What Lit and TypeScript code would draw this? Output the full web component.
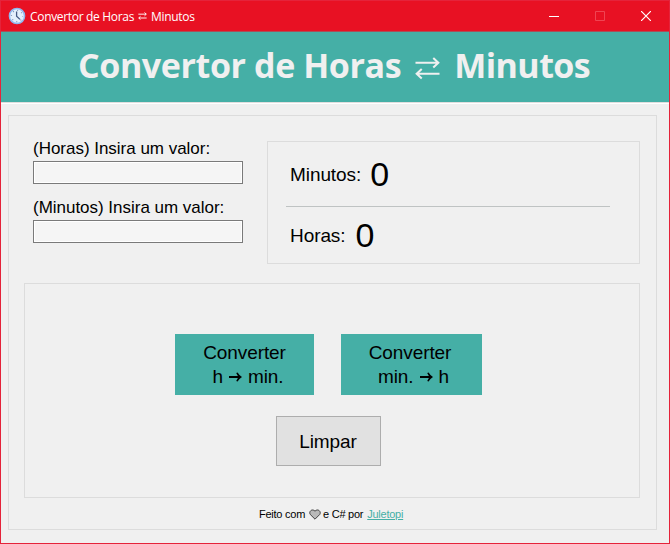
import { LitElement, html, css, svg } from "lit";
import { customElement, property, state } from "lit/decorators.js";

const swapIcon = (cls: string, stroke: number) => html`
  <svg class=${cls} viewBox="0 0 26 24" fill="none" stroke="currentColor" stroke-width=${stroke}>
    ${svg`<path d="M0.5 6.5H24M19 1.5l5.3 5-5.3 5M25.5 18H2M7 13l-5.3 5 5.3 5"/>`}
  </svg>`;

const arrowIcon = () => html`
  <svg class="arrow" viewBox="0 0 13 10" fill="currentColor">
    <path d="M0 4.1H8.9L7.2 1L8.6 0.6Q10.2 3.4 13 5Q10.2 6.6 8.6 9.4L7.2 9L8.9 5.9H0Z" />
  </svg>`;

@customElement("title-bar")
export class TitleBar extends LitElement {
  static styles = css`
    :host {
      display: flex;
      align-items: center;
      height: 31px;
      flex: none;
      background: #e81123;
      color: #fff;
      font: 12px "Open Sans", "Noto Sans", sans-serif;
      border-bottom: 1px solid #a8505a;
      box-sizing: border-box;
      white-space: pre;
    }
    .clock { width: 18px; height: 18px; margin: 0 4px 0 7px; }
    .name { letter-spacing: -0.32px; }
    .swap { width: 9px; height: 8px; margin: 0 4px 0 4px; }
    .controls { margin: -1px 0 0 auto; display: flex; }
    .control { width: 46px; display: grid; place-items: center; }
    .control svg { width: 10px; height: 10px; }
    .dim { color: #f04452; }
  `;
  render() {
    return html`
      <svg class="clock" viewBox="0 0 18 18">
        <circle cx="9" cy="9" r="7.6" fill="#e4effc" stroke="#8fb8ee" stroke-width="1.5" />
        <circle cx="9" cy="9" r="5.6" fill="none" stroke="#8195b8" stroke-width="1.2" stroke-dasharray="1 3.4" stroke-dashoffset="0.5" />
        <path d="M8.6 4.6V9.2L12 12.4" fill="none" stroke="#465a84" stroke-width="1.3" />
      </svg>
      <span class="name">Convertor de Horas</span>${swapIcon("swap", 2.8)}<span class="name">Minutos</span>
      <div class="controls">
        <div class="control">
          <svg viewBox="0 0 10 10"><path d="M0 5.5H10" stroke="#fff" /></svg>
        </div>
        <div class="control dim">
          <svg viewBox="0 0 10 10"><path d="M.5 .5h9v9h-9z" fill="none" stroke="currentColor" /></svg>
        </div>
        <div class="control">
          <svg viewBox="0 0 10 10"><path d="M0 0L10 10M10 0L0 10" stroke="#fff" stroke-width="1.2" /></svg>
        </div>
      </div>`;
  }
}

@customElement("value-field")
export class ValueField extends LitElement {
  @property() label = "";
  @property() value = "";
  static styles = css`
    :host { display: block; height: 59px; }
    label {
      display: block;
      height: 23px;
      line-height: 21px;
      font-size: 17px;
      white-space: nowrap;
      letter-spacing: -0.02px;
    }
    input {
      display: block;
      box-sizing: border-box;
      width: 210px;
      height: 23px;
      padding: 0 3px;
      border: 1px solid #7a7a7a;
      border-radius: 0;
      outline: none;
      background: #f5f5f5;
      box-shadow: inset 0 0 0 1px #fff;
      font: 15px "Liberation Sans", sans-serif;
    }
  `;
  private onInput(e: Event) {
    this.value = (e.target as HTMLInputElement).value;
    this.dispatchEvent(new CustomEvent("value-change", { detail: this.value }));
  }
  render() {
    return html`<label for="f">${this.label}</label>
      <input id="f" .value=${this.value} @input=${this.onInput} />`;
  }
}

@customElement("app-root")
export class AppRoot extends LitElement {
  @state() private hoursIn = "";
  @state() private minutesIn = "";
  @state() private minutes = 0;
  @state() private hours = 0;

  static styles = css`
    :host {
      display: flex;
      flex-direction: column;
      box-sizing: border-box;
      width: 670px;
      height: 544px;
      border: 1px solid #e5233a;
      background: #f0f0f0;
      color: #000;
      font-family: "Liberation Sans", Arial, sans-serif;
    }
    .banner {
      display: flex;
      align-items: center;
      flex: none;
      box-sizing: border-box;
      height: 70px;
      padding: 0 0 4px 77px;
      background: #45afa6;
      color: #f0f0f0;
      font: bold 34px "Open Sans", "Noto Sans", sans-serif;
      white-space: nowrap;
    }
    .t1 { letter-spacing: -0.4px; }
    .t2 { letter-spacing: -0.55px; }
    .swap { width: 25px; height: 24px; margin: 5px 14px 0 14px; }
    .rule { height: 2px; flex: none; background: #fff; border-top: 1px solid #e0dede; box-sizing: border-box; }
    .frame { border: 1px solid #dcdcdc; box-sizing: border-box; }
    .outer { width: 649px; height: 415px; margin: 11px 0 0 7px; padding: 25px 0 0 15px; }
    .top { display: flex; height: 142px; }
    .fields { width: 234px; padding: 0 0 0 9px; margin-top: -3px; box-sizing: content-box; }
    .results { width: 373px; height: 123px; padding: 0 29px 0 18px; }
    .result { display: flex; align-items: center; height: 64px; padding-left: 4px; font-size: 19px; }
    .result + .result { border-top: 1px solid #bfc3c3; height: 56px; }
    .result .key { margin-top: 2px; letter-spacing: -0.08px; }
    .result .num { font-size: 34px; margin-left: 9px; }
    .result + .result .num { margin-left: 10px; }
    .actions { width: 616px; height: 215px; padding: 50px 0 0 150px; }
    .pair { display: flex; gap: 27px; }
    button {
      display: block;
      box-sizing: border-box;
      margin: 0;
      padding: 0;
      border: 0;
      border-radius: 0;
      color: #000;
      font: 19px/24px "Liberation Sans", Arial, sans-serif;
      letter-spacing: -0.1px;
      white-space: pre;
    }
    .convert { width: 139px; height: 61px; background: #45afa6; }
    .convert.wide { width: 141px; padding-right: 3px; }
    .line { display: flex; justify-content: center; align-items: center; gap: 6px; height: 24px; }
    .line.second { padding-left: 7px; }
    .arrow { width: 13px; height: 10px; margin-top: 1px; }
    .clear { width: 105px; height: 50px; margin: 21px 0 0 101px; padding: 1px 1px 0 0; border: 1px solid #adadad; background: #e1e1e1; }
    .credit {
      display: flex;
      align-items: center;
      height: 32px;
      padding-left: 235px;
      font-size: 11px;
      letter-spacing: -0.25px;
      white-space: nowrap;
    }
    .heart { width: 12px; height: 11px; margin: 0 2px 0 4px; }
    .credit a { margin-left: 4px; color: #45afa6; text-decoration: underline; }
  `;

  private toMinutes() {
    this.minutes = (Number(this.hoursIn) || 0) * 60;
  }
  private toHours() {
    this.hours = (Number(this.minutesIn) || 0) / 60;
  }
  private clear() {
    this.hoursIn = this.minutesIn = "";
    this.minutes = this.hours = 0;
  }

  render() {
    return html`
      <title-bar></title-bar>
      <header class="banner">
        <span class="t1">Convertor de Horas</span>${swapIcon("swap", 2.1)}<span class="t2">Minutos</span>
      </header>
      <div class="rule"></div>
      <main class="frame outer">
        <div class="top">
          <div class="fields">
            <value-field label="(Horas) Insira um valor:" .value=${this.hoursIn}
              @value-change=${(e: CustomEvent) => (this.hoursIn = e.detail)}></value-field>
            <value-field label="(Minutos) Insira um valor:" .value=${this.minutesIn}
              @value-change=${(e: CustomEvent) => (this.minutesIn = e.detail)}></value-field>
          </div>
          <section class="frame results">
            <div class="result"><span class="key">Minutos:</span><span class="num">${this.minutes}</span></div>
            <div class="result"><span class="key">Horas:</span><span class="num">${this.hours}</span></div>
          </section>
        </div>
        <section class="frame actions">
          <div class="pair">
            <button class="convert" @click=${this.toMinutes}><span class="line">Converter</span><span class="line second"><span>h</span>${arrowIcon()}<span>min.</span></span></button>
            <button class="convert wide" @click=${this.toHours}><span class="line">Converter</span><span class="line second"><span>min.</span>${arrowIcon()}<span>h</span></span></button>
          </div>
          <button class="clear" @click=${this.clear}>Limpar</button>
        </section>
        <footer class="credit">
          <span class="c1">Feito com</span>
          <svg class="heart" viewBox="0 0 12 11">
            <path d="M6 10.2L1.2 5.4C-0.6 2.6 3.2-1 6 2.2C8.8-1 12.6 2.6 10.8 5.4Z" fill="#b9b9b9" stroke="#444" />
          </svg>
          <span class="c2">e C# por</span>
          <a>Juletopi</a>
        </footer>
      </main>`;
  }
}
